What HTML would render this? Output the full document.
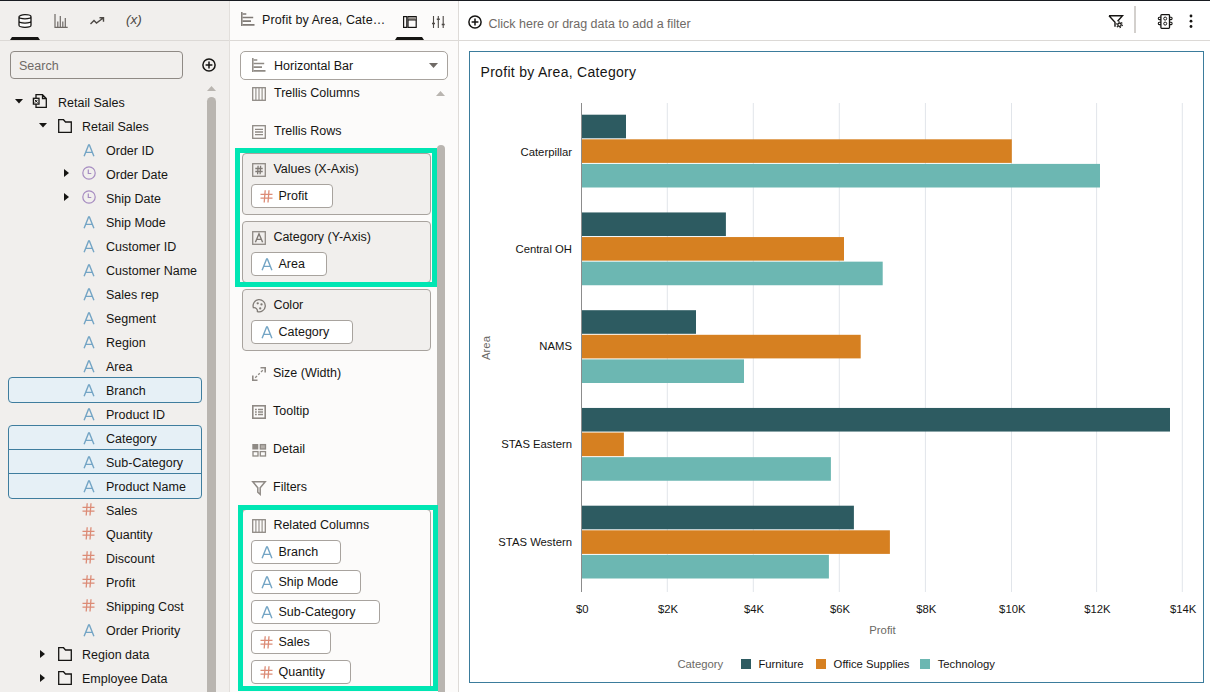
<!DOCTYPE html><html><head><meta charset="utf-8"><style>
html,body{margin:0;padding:0;width:1210px;height:692px;overflow:hidden;background:#fff;}
body{position:relative;font-family:"Liberation Sans",sans-serif;}
.t{position:absolute;white-space:nowrap;font-family:"Liberation Sans",sans-serif;}
svg{overflow:visible}
</style></head><body>
<div style="position:absolute;left:0px;top:0px;width:230px;height:692px;box-sizing:border-box;background:#f1efed;"></div>
<div style="position:absolute;left:229px;top:0px;width:1px;height:692px;box-sizing:border-box;background:#e2dfdc;"></div>
<div style="position:absolute;left:230px;top:0px;width:228px;height:692px;box-sizing:border-box;background:#fcfbfa;"></div>
<div style="position:absolute;left:458px;top:0px;width:1px;height:692px;box-sizing:border-box;background:#dedbd8;"></div>
<div style="position:absolute;left:459px;top:0px;width:751px;height:692px;box-sizing:border-box;background:#ffffff;"></div>
<div style="position:absolute;left:0px;top:0px;width:1210px;height:1px;box-sizing:border-box;background:#181b21;"></div>
<div style="position:absolute;left:0px;top:40px;width:229px;height:1px;box-sizing:border-box;background:#dcd9d6;"></div>
<svg style="position:absolute;left:10px;top:37px" width="30" height="3" viewBox="0 0 30 3"><path d="M2 0H28L30 3H0Z" fill="#161513"/></svg>
<svg style="position:absolute;left:18px;top:14px" width="14" height="14" viewBox="0 0 14 14"><path d="M1 2.8C1 1.5 3.9 0.7 7 0.7S13 1.5 13 2.8V11.2C13 12.5 10.1 13.3 7 13.3S1 12.5 1 11.2Z M1 2.8C1 4.1 3.9 4.9 7 4.9S13 4.1 13 2.8 M1 7C1 8.3 3.9 9.1 7 9.1S13 8.3 13 7" fill="#fff" stroke="#161513" stroke-width="1.3"/></svg>
<svg style="position:absolute;left:54px;top:14px" width="14" height="14" viewBox="0 0 14 14"><path d="M1 0V13.3H13.7 M3.8 13V7.5 M6.3 13V2 M8.8 13V7.5 M11.3 13V4" fill="none" stroke="#6f6a66" stroke-width="1.2"/></svg>
<svg style="position:absolute;left:90px;top:17px" width="15" height="8" viewBox="0 0 15 8"><path d="M0.5 7L4 3.5L6.5 6L13.5 0.8 M9.5 0.8H13.5V4.8" fill="none" stroke="#4d4945" stroke-width="1.4"/></svg>
<div class="t" style="left:126px;top:13.27px;font-size:13.5px;line-height:13.5px;color:#4d4945;font-style:italic;">(x)</div>
<div style="position:absolute;left:10px;top:51px;width:173px;height:28px;box-sizing:border-box;border:1px solid #8f8a85;border-radius:4px;background:#f1efed;"></div>
<div class="t" style="left:19px;top:60.32px;font-size:12.5px;line-height:12.5px;color:#6f6a66;">Search</div>
<svg style="position:absolute;left:202px;top:58px" width="14" height="14" viewBox="0 0 14 14"><circle cx="7" cy="7" r="6.1" fill="none" stroke="#161513" stroke-width="1.5"/><path d="M7 3.6V10.4M3.6 7H10.4" stroke="#161513" stroke-width="1.5"/></svg>
<svg style="position:absolute;left:207px;top:86px" width="9" height="5" viewBox="0 0 9 5"><path d="M0 5H9L4.5 0Z" fill="#b9b5b0"/></svg>
<div style="position:absolute;left:207px;top:97px;width:9px;height:600px;box-sizing:border-box;background:#b9b5b0;border-radius:4.5px;"></div>
<div style="position:absolute;left:8px;top:377px;width:194px;height:26px;box-sizing:border-box;border:1px solid #3f7d9e;border-radius:4px;background:#e6f0f6;"></div>
<div style="position:absolute;left:8px;top:425px;width:194px;height:74px;box-sizing:border-box;border:1px solid #3f7d9e;border-radius:4px;background:#e6f0f6;"></div>
<div style="position:absolute;left:8px;top:449px;width:194px;height:1px;box-sizing:border-box;background:#3f7d9e;"></div>
<div style="position:absolute;left:8px;top:473px;width:194px;height:1px;box-sizing:border-box;background:#3f7d9e;"></div>
<svg style="position:absolute;left:15px;top:99px" width="8" height="5" viewBox="0 0 8 5"><path d="M0 0H8L4 4.5Z" fill="#161513"/></svg>
<svg style="position:absolute;left:33px;top:94px" width="14" height="14" viewBox="0 0 14 14"><path d="M3 0.7H9.5L13.3 4.5V13.3H3Z M9.5 0.7V4.5H13.3" fill="none" stroke="#161513" stroke-width="1.3"/><rect x="0.4" y="4.3" width="5.6" height="5.8" fill="#f1efed" stroke="#161513" stroke-width="1.3"/><path d="M1.8 5.8L4.6 8.6M4.6 5.8L1.8 8.6" stroke="#161513" stroke-width="1"/></svg>
<div class="t" style="left:58px;top:97.02px;font-size:12.5px;line-height:12.5px;color:#161513;">Retail Sales</div>
<svg style="position:absolute;left:39px;top:123px" width="8" height="5" viewBox="0 0 8 5"><path d="M0 0H8L4 4.5Z" fill="#161513"/></svg>
<svg style="position:absolute;left:58px;top:119px" width="14" height="14" viewBox="0 0 14 14"><path d="M0.7 0.7H5.5L7.5 3H13.3V13.3H0.7Z" fill="none" stroke="#161513" stroke-width="1.3"/></svg>
<div class="t" style="left:82px;top:121.02px;font-size:12.5px;line-height:12.5px;color:#161513;">Retail Sales</div>
<svg style="position:absolute;left:83px;top:144px" width="12" height="13" viewBox="0 0 12 13"><path d="M1.1 12.2 L5.6 0.9 H6.4 L10.9 12.2 M3.1 8.4 H8.9" fill="none" stroke="#74a5c5" stroke-width="1.4"/></svg>
<div class="t" style="left:106px;top:145.02px;font-size:12.5px;line-height:12.5px;color:#161513;">Order ID</div>
<svg style="position:absolute;left:64px;top:169px" width="5" height="8" viewBox="0 0 5 8"><path d="M0 0V8L5 4Z" fill="#161513"/></svg>
<svg style="position:absolute;left:82px;top:166px" width="14" height="14" viewBox="0 0 14 14"><circle cx="7" cy="7" r="6.2" fill="none" stroke="#a68cc1" stroke-width="1.2"/><path d="M6.3 3.5V7.5H9.3" fill="none" stroke="#a68cc1" stroke-width="1.2"/></svg>
<div class="t" style="left:106px;top:169.02px;font-size:12.5px;line-height:12.5px;color:#161513;">Order Date</div>
<svg style="position:absolute;left:64px;top:193px" width="5" height="8" viewBox="0 0 5 8"><path d="M0 0V8L5 4Z" fill="#161513"/></svg>
<svg style="position:absolute;left:82px;top:190px" width="14" height="14" viewBox="0 0 14 14"><circle cx="7" cy="7" r="6.2" fill="none" stroke="#a68cc1" stroke-width="1.2"/><path d="M6.3 3.5V7.5H9.3" fill="none" stroke="#a68cc1" stroke-width="1.2"/></svg>
<div class="t" style="left:106px;top:193.02px;font-size:12.5px;line-height:12.5px;color:#161513;">Ship Date</div>
<svg style="position:absolute;left:83px;top:216px" width="12" height="13" viewBox="0 0 12 13"><path d="M1.1 12.2 L5.6 0.9 H6.4 L10.9 12.2 M3.1 8.4 H8.9" fill="none" stroke="#74a5c5" stroke-width="1.4"/></svg>
<div class="t" style="left:106px;top:217.02px;font-size:12.5px;line-height:12.5px;color:#161513;">Ship Mode</div>
<svg style="position:absolute;left:83px;top:240px" width="12" height="13" viewBox="0 0 12 13"><path d="M1.1 12.2 L5.6 0.9 H6.4 L10.9 12.2 M3.1 8.4 H8.9" fill="none" stroke="#74a5c5" stroke-width="1.4"/></svg>
<div class="t" style="left:106px;top:241.02px;font-size:12.5px;line-height:12.5px;color:#161513;">Customer ID</div>
<svg style="position:absolute;left:83px;top:264px" width="12" height="13" viewBox="0 0 12 13"><path d="M1.1 12.2 L5.6 0.9 H6.4 L10.9 12.2 M3.1 8.4 H8.9" fill="none" stroke="#74a5c5" stroke-width="1.4"/></svg>
<div class="t" style="left:106px;top:265.02px;font-size:12.5px;line-height:12.5px;color:#161513;">Customer Name</div>
<svg style="position:absolute;left:83px;top:288px" width="12" height="13" viewBox="0 0 12 13"><path d="M1.1 12.2 L5.6 0.9 H6.4 L10.9 12.2 M3.1 8.4 H8.9" fill="none" stroke="#74a5c5" stroke-width="1.4"/></svg>
<div class="t" style="left:106px;top:289.02px;font-size:12.5px;line-height:12.5px;color:#161513;">Sales rep</div>
<svg style="position:absolute;left:83px;top:312px" width="12" height="13" viewBox="0 0 12 13"><path d="M1.1 12.2 L5.6 0.9 H6.4 L10.9 12.2 M3.1 8.4 H8.9" fill="none" stroke="#74a5c5" stroke-width="1.4"/></svg>
<div class="t" style="left:106px;top:313.02px;font-size:12.5px;line-height:12.5px;color:#161513;">Segment</div>
<svg style="position:absolute;left:83px;top:336px" width="12" height="13" viewBox="0 0 12 13"><path d="M1.1 12.2 L5.6 0.9 H6.4 L10.9 12.2 M3.1 8.4 H8.9" fill="none" stroke="#74a5c5" stroke-width="1.4"/></svg>
<div class="t" style="left:106px;top:337.02px;font-size:12.5px;line-height:12.5px;color:#161513;">Region</div>
<svg style="position:absolute;left:83px;top:360px" width="12" height="13" viewBox="0 0 12 13"><path d="M1.1 12.2 L5.6 0.9 H6.4 L10.9 12.2 M3.1 8.4 H8.9" fill="none" stroke="#74a5c5" stroke-width="1.4"/></svg>
<div class="t" style="left:106px;top:361.02px;font-size:12.5px;line-height:12.5px;color:#161513;">Area</div>
<svg style="position:absolute;left:83px;top:384px" width="12" height="13" viewBox="0 0 12 13"><path d="M1.1 12.2 L5.6 0.9 H6.4 L10.9 12.2 M3.1 8.4 H8.9" fill="none" stroke="#74a5c5" stroke-width="1.4"/></svg>
<div class="t" style="left:106px;top:385.02px;font-size:12.5px;line-height:12.5px;color:#161513;">Branch</div>
<svg style="position:absolute;left:83px;top:408px" width="12" height="13" viewBox="0 0 12 13"><path d="M1.1 12.2 L5.6 0.9 H6.4 L10.9 12.2 M3.1 8.4 H8.9" fill="none" stroke="#74a5c5" stroke-width="1.4"/></svg>
<div class="t" style="left:106px;top:409.02px;font-size:12.5px;line-height:12.5px;color:#161513;">Product ID</div>
<svg style="position:absolute;left:83px;top:432px" width="12" height="13" viewBox="0 0 12 13"><path d="M1.1 12.2 L5.6 0.9 H6.4 L10.9 12.2 M3.1 8.4 H8.9" fill="none" stroke="#74a5c5" stroke-width="1.4"/></svg>
<div class="t" style="left:106px;top:433.02px;font-size:12.5px;line-height:12.5px;color:#161513;">Category</div>
<svg style="position:absolute;left:83px;top:456px" width="12" height="13" viewBox="0 0 12 13"><path d="M1.1 12.2 L5.6 0.9 H6.4 L10.9 12.2 M3.1 8.4 H8.9" fill="none" stroke="#74a5c5" stroke-width="1.4"/></svg>
<div class="t" style="left:106px;top:457.02px;font-size:12.5px;line-height:12.5px;color:#161513;">Sub-Category</div>
<svg style="position:absolute;left:83px;top:480px" width="12" height="13" viewBox="0 0 12 13"><path d="M1.1 12.2 L5.6 0.9 H6.4 L10.9 12.2 M3.1 8.4 H8.9" fill="none" stroke="#74a5c5" stroke-width="1.4"/></svg>
<div class="t" style="left:106px;top:481.02px;font-size:12.5px;line-height:12.5px;color:#161513;">Product Name</div>
<svg style="position:absolute;left:82px;top:503px" width="13" height="13" viewBox="0 0 13 13"><path d="M0.5 4.3H12.5 M0.5 8.2H12.5 M5.2 0.3 L4.2 12.5 M9 0.3 L8 12.5" fill="none" stroke="#dc8b76" stroke-width="1.3"/></svg>
<div class="t" style="left:106px;top:505.02px;font-size:12.5px;line-height:12.5px;color:#161513;">Sales</div>
<svg style="position:absolute;left:82px;top:527px" width="13" height="13" viewBox="0 0 13 13"><path d="M0.5 4.3H12.5 M0.5 8.2H12.5 M5.2 0.3 L4.2 12.5 M9 0.3 L8 12.5" fill="none" stroke="#dc8b76" stroke-width="1.3"/></svg>
<div class="t" style="left:106px;top:529.02px;font-size:12.5px;line-height:12.5px;color:#161513;">Quantity</div>
<svg style="position:absolute;left:82px;top:551px" width="13" height="13" viewBox="0 0 13 13"><path d="M0.5 4.3H12.5 M0.5 8.2H12.5 M5.2 0.3 L4.2 12.5 M9 0.3 L8 12.5" fill="none" stroke="#dc8b76" stroke-width="1.3"/></svg>
<div class="t" style="left:106px;top:553.02px;font-size:12.5px;line-height:12.5px;color:#161513;">Discount</div>
<svg style="position:absolute;left:82px;top:575px" width="13" height="13" viewBox="0 0 13 13"><path d="M0.5 4.3H12.5 M0.5 8.2H12.5 M5.2 0.3 L4.2 12.5 M9 0.3 L8 12.5" fill="none" stroke="#dc8b76" stroke-width="1.3"/></svg>
<div class="t" style="left:106px;top:577.02px;font-size:12.5px;line-height:12.5px;color:#161513;">Profit</div>
<svg style="position:absolute;left:82px;top:599px" width="13" height="13" viewBox="0 0 13 13"><path d="M0.5 4.3H12.5 M0.5 8.2H12.5 M5.2 0.3 L4.2 12.5 M9 0.3 L8 12.5" fill="none" stroke="#dc8b76" stroke-width="1.3"/></svg>
<div class="t" style="left:106px;top:601.02px;font-size:12.5px;line-height:12.5px;color:#161513;">Shipping Cost</div>
<svg style="position:absolute;left:83px;top:624px" width="12" height="13" viewBox="0 0 12 13"><path d="M1.1 12.2 L5.6 0.9 H6.4 L10.9 12.2 M3.1 8.4 H8.9" fill="none" stroke="#74a5c5" stroke-width="1.4"/></svg>
<div class="t" style="left:106px;top:625.02px;font-size:12.5px;line-height:12.5px;color:#161513;">Order Priority</div>
<svg style="position:absolute;left:40px;top:650px" width="5" height="8" viewBox="0 0 5 8"><path d="M0 0V8L5 4Z" fill="#161513"/></svg>
<svg style="position:absolute;left:58px;top:647px" width="14" height="14" viewBox="0 0 14 14"><path d="M0.7 0.7H5.5L7.5 3H13.3V13.3H0.7Z" fill="none" stroke="#161513" stroke-width="1.3"/></svg>
<div class="t" style="left:82px;top:649.02px;font-size:12.5px;line-height:12.5px;color:#161513;">Region data</div>
<svg style="position:absolute;left:40px;top:674px" width="5" height="8" viewBox="0 0 5 8"><path d="M0 0V8L5 4Z" fill="#161513"/></svg>
<svg style="position:absolute;left:58px;top:671px" width="14" height="14" viewBox="0 0 14 14"><path d="M0.7 0.7H5.5L7.5 3H13.3V13.3H0.7Z" fill="none" stroke="#161513" stroke-width="1.3"/></svg>
<div class="t" style="left:82px;top:673.02px;font-size:12.5px;line-height:12.5px;color:#161513;">Employee Data</div>
<div style="position:absolute;left:230px;top:40px;width:228px;height:1px;box-sizing:border-box;background:#dcd9d6;"></div>
<svg style="position:absolute;left:241px;top:12px" width="14" height="14" viewBox="0 0 14 14"><path d="M0.8 0V14" fill="none" stroke="#7f7a75" stroke-width="1.5"/><path d="M1.5 2H5.3 M1.5 5.5H12.2 M1.5 9.2H10 M1.5 12.8H13.5" fill="none" stroke="#7f7a75" stroke-width="1.7"/></svg>
<div class="t" style="left:262px;top:14.12px;font-size:12.5px;line-height:12.5px;color:#161513;letter-spacing:0.12px;">Profit by Area, Cate…</div>
<svg style="position:absolute;left:403px;top:16px" width="14" height="12" viewBox="0 0 14 12"><rect x="0.6" y="0.6" width="3.2" height="10.8" fill="none" stroke="#161513" stroke-width="1.2"/><rect x="5" y="0.6" width="8.2" height="10.8" fill="none" stroke="#161513" stroke-width="1.2"/><rect x="5.6" y="1.2" width="7" height="2.6" fill="#8f8a85"/><path d="M5 4H13.2" stroke="#161513" stroke-width="1"/></svg>
<svg style="position:absolute;left:395px;top:37px" width="29" height="3" viewBox="0 0 29 3"><path d="M2 0H27L29 3H0Z" fill="#161513"/></svg>
<svg style="position:absolute;left:432px;top:16px" width="13" height="12" viewBox="0 0 13 12"><path d="M1.5 0V12 M6.3 0V12 M11.2 0V12" fill="none" stroke="#4d4945" stroke-width="1.1"/><path d="M0 7.4H3 M4.8 3.3H7.8 M9.7 8.4H12.7" fill="none" stroke="#4d4945" stroke-width="1.5"/></svg>
<div style="position:absolute;left:240px;top:51px;width:208px;height:29px;box-sizing:border-box;border:1px solid #a8a39e;border-radius:5px;background:#fff;"></div>
<svg style="position:absolute;left:252px;top:58px" width="14" height="14" viewBox="0 0 14 14"><path d="M0.8 0V14" fill="none" stroke="#8f8a85" stroke-width="1.5"/><path d="M1.5 2H5.3 M1.5 5.5H12.2 M1.5 9.2H10 M1.5 12.8H13.5" fill="none" stroke="#8f8a85" stroke-width="1.7"/></svg>
<div class="t" style="left:274px;top:60.32px;font-size:12.5px;line-height:12.5px;color:#161513;">Horizontal Bar</div>
<svg style="position:absolute;left:429px;top:63px" width="9" height="5" viewBox="0 0 9 5"><path d="M0 0H9L4.5 5Z" fill="#6f6a66"/></svg>
<svg style="position:absolute;left:252px;top:87px" width="14" height="14" viewBox="0 0 14 14"><rect x="0.7" y="0.7" width="12.6" height="12.6" fill="none" stroke="#8f8a85" stroke-width="1.3"/><path d="M3.9 1V13 M7 1V13 M10.1 1V13" stroke="#8f8a85" stroke-width="1.1"/></svg>
<div class="t" style="left:274px;top:87.02px;font-size:12.5px;line-height:12.5px;color:#161513;">Trellis Columns</div>
<svg style="position:absolute;left:436px;top:91px" width="9" height="5" viewBox="0 0 9 5"><path d="M0 5H9L4.5 0Z" fill="#b9b5b0"/></svg>
<svg style="position:absolute;left:252px;top:125px" width="14" height="14" viewBox="0 0 14 14"><rect x="0.7" y="0.7" width="12.6" height="12.6" fill="none" stroke="#8f8a85" stroke-width="1.3"/><path d="M3 4.3H11 M3 7H11 M3 9.7H11" stroke="#8f8a85" stroke-width="1.3"/></svg>
<div class="t" style="left:274px;top:125.02px;font-size:12.5px;line-height:12.5px;color:#161513;">Trellis Rows</div>
<div style="position:absolute;left:437px;top:145px;width:8px;height:560px;box-sizing:border-box;background:#b9b5b0;border-radius:4px;"></div>
<div style="position:absolute;left:242px;top:153px;width:189px;height:62px;box-sizing:border-box;border:1px solid #a8a39e;border-radius:4px;background:#f1efed;"></div>
<svg style="position:absolute;left:252px;top:163px" width="14" height="14" viewBox="0 0 14 14"><rect x="0.7" y="0.7" width="12.6" height="12.6" fill="none" stroke="#8f8a85" stroke-width="1.3"/><path d="M3.3 5.5H10.7M3.3 8.5H10.7M6.1 2.8L5.6 11.2M8.6 2.8L8.1 11.2" stroke="#7f7a75" stroke-width="1.3"/></svg>
<div class="t" style="left:273.4px;top:162.62px;font-size:12.5px;line-height:12.5px;color:#161513;">Values (X-Axis)</div>
<div style="position:absolute;left:251px;top:184px;width:82px;height:24px;box-sizing:border-box;border:1px solid #a8a39e;border-radius:4px;background:#fff;"></div>
<svg style="position:absolute;left:259.5px;top:189.5px" width="13" height="13" viewBox="0 0 13 13"><path d="M0.5 4.3H12.5 M0.5 8.2H12.5 M5.2 0.3 L4.2 12.5 M9 0.3 L8 12.5" fill="none" stroke="#dc8b76" stroke-width="1.3"/></svg>
<div class="t" style="left:278.5px;top:189.82px;font-size:12.5px;line-height:12.5px;color:#161513;">Profit</div>
<div style="position:absolute;left:242px;top:221px;width:189px;height:62px;box-sizing:border-box;border:1px solid #a8a39e;border-radius:4px;background:#f1efed;"></div>
<svg style="position:absolute;left:252px;top:231px" width="14" height="14" viewBox="0 0 14 14"><rect x="0.7" y="0.7" width="12.6" height="12.6" fill="none" stroke="#8f8a85" stroke-width="1.3"/><path d="M3.4 11.2L7 2.8L10.6 11.2M4.7 8.4H9.3" fill="none" stroke="#7f7a75" stroke-width="1.4"/></svg>
<div class="t" style="left:273.4px;top:230.62px;font-size:12.5px;line-height:12.5px;color:#161513;">Category (Y-Axis)</div>
<div style="position:absolute;left:251px;top:252px;width:76px;height:24px;box-sizing:border-box;border:1px solid #a8a39e;border-radius:4px;background:#fff;"></div>
<svg style="position:absolute;left:260.5px;top:258px" width="12" height="13" viewBox="0 0 12 13"><path d="M1.1 12.2 L5.6 0.9 H6.4 L10.9 12.2 M3.1 8.4 H8.9" fill="none" stroke="#74a5c5" stroke-width="1.4"/></svg>
<div class="t" style="left:278.5px;top:257.82px;font-size:12.5px;line-height:12.5px;color:#161513;">Area</div>
<div style="position:absolute;left:242px;top:289px;width:189px;height:62px;box-sizing:border-box;border:1px solid #a8a39e;border-radius:4px;background:#f1efed;"></div>
<svg style="position:absolute;left:252px;top:299px" width="14" height="14" viewBox="0 0 14 14"><path d="M1.4 8.7A6.1 6.1 0 1 1 5.4 12.6A3.4 3.4 0 0 0 1.4 8.7Z" fill="none" stroke="#7f7a75" stroke-width="1.3"/><circle cx="5.7" cy="4.3" r="1.15" fill="#7f7a75"/><circle cx="9.5" cy="5.4" r="1.15" fill="#7f7a75"/><circle cx="8.2" cy="9.4" r="1.15" fill="#7f7a75"/></svg>
<div class="t" style="left:273.4px;top:298.62px;font-size:12.5px;line-height:12.5px;color:#161513;">Color</div>
<div style="position:absolute;left:251px;top:320px;width:102px;height:24px;box-sizing:border-box;border:1px solid #a8a39e;border-radius:4px;background:#fff;"></div>
<svg style="position:absolute;left:260.5px;top:326px" width="12" height="13" viewBox="0 0 12 13"><path d="M1.1 12.2 L5.6 0.9 H6.4 L10.9 12.2 M3.1 8.4 H8.9" fill="none" stroke="#74a5c5" stroke-width="1.4"/></svg>
<div class="t" style="left:278.5px;top:325.82px;font-size:12.5px;line-height:12.5px;color:#161513;">Category</div>
<div style="position:absolute;left:235px;top:148px;width:202px;height:139px;box-sizing:border-box;border:5px solid #00e6b3;"></div>
<svg style="position:absolute;left:252px;top:367px" width="14" height="14" viewBox="0 0 14 14"><path d="M0.8 8.5V13.2H5.5 M8.5 0.8H13.2V5.5" fill="none" stroke="#8f8a85" stroke-width="1.6"/><path d="M3.2 10.8L5 9 M6.2 7.8L7.8 6.2 M9 5L10.8 3.2" stroke="#8f8a85" stroke-width="1.3"/></svg>
<div class="t" style="left:273px;top:367.32px;font-size:12.5px;line-height:12.5px;color:#161513;">Size (Width)</div>
<svg style="position:absolute;left:252px;top:405px" width="14" height="14" viewBox="0 0 14 14"><rect x="0.8" y="0.8" width="12.4" height="12.4" fill="none" stroke="#8f8a85" stroke-width="1.6"/><path d="M3 4.5H4.8M6 4.5H11M3 7H4.8M6 7H11M3 9.5H4.8M6 9.5H11" stroke="#8f8a85" stroke-width="1.3"/></svg>
<div class="t" style="left:273px;top:405.32px;font-size:12.5px;line-height:12.5px;color:#161513;">Tooltip</div>
<svg style="position:absolute;left:252px;top:443px" width="14" height="14" viewBox="0 0 14 14"><rect x="0.3" y="1" width="6" height="5.5" fill="#8f8a85"/><rect x="8.3" y="1.6" width="5.2" height="4.4" fill="#b5b0ab" stroke="#8f8a85" stroke-width="1.3"/><rect x="1" y="8.6" width="5" height="4.4" fill="none" stroke="#8f8a85" stroke-width="1.3"/><rect x="8.3" y="8.6" width="5.2" height="4.4" fill="none" stroke="#8f8a85" stroke-width="1.3"/></svg>
<div class="t" style="left:273px;top:443.32px;font-size:12.5px;line-height:12.5px;color:#161513;">Detail</div>
<svg style="position:absolute;left:252px;top:481px" width="14" height="14" viewBox="0 0 14 14"><path d="M0.8 0.8H13.2L8.2 6.8V13.3L5.8 11.2V6.8Z" fill="none" stroke="#8f8a85" stroke-width="1.5"/></svg>
<div class="t" style="left:273px;top:481.32px;font-size:12.5px;line-height:12.5px;color:#161513;">Filters</div>
<div style="position:absolute;left:242px;top:509px;width:189px;height:200px;box-sizing:border-box;border:1px solid #a8a39e;border-radius:4px;background:#fcfbfa;"></div>
<svg style="position:absolute;left:252px;top:519px" width="14" height="14" viewBox="0 0 14 14"><rect x="0.7" y="0.7" width="12.6" height="12.6" fill="none" stroke="#8f8a85" stroke-width="1.3"/><path d="M3.9 1V13 M7 1V13 M10.1 1V13" stroke="#8f8a85" stroke-width="1.1"/></svg>
<div class="t" style="left:273.4px;top:519.32px;font-size:12.5px;line-height:12.5px;color:#161513;">Related Columns</div>
<div style="position:absolute;left:251px;top:540px;width:90px;height:24px;box-sizing:border-box;border:1px solid #a8a39e;border-radius:4px;background:#fff;"></div>
<svg style="position:absolute;left:260.5px;top:546px" width="12" height="13" viewBox="0 0 12 13"><path d="M1.1 12.2 L5.6 0.9 H6.4 L10.9 12.2 M3.1 8.4 H8.9" fill="none" stroke="#74a5c5" stroke-width="1.4"/></svg>
<div class="t" style="left:278.5px;top:545.82px;font-size:12.5px;line-height:12.5px;color:#161513;">Branch</div>
<div style="position:absolute;left:251px;top:570px;width:110px;height:24px;box-sizing:border-box;border:1px solid #a8a39e;border-radius:4px;background:#fff;"></div>
<svg style="position:absolute;left:260.5px;top:576px" width="12" height="13" viewBox="0 0 12 13"><path d="M1.1 12.2 L5.6 0.9 H6.4 L10.9 12.2 M3.1 8.4 H8.9" fill="none" stroke="#74a5c5" stroke-width="1.4"/></svg>
<div class="t" style="left:278.5px;top:575.82px;font-size:12.5px;line-height:12.5px;color:#161513;">Ship Mode</div>
<div style="position:absolute;left:251px;top:600px;width:129px;height:24px;box-sizing:border-box;border:1px solid #a8a39e;border-radius:4px;background:#fff;"></div>
<svg style="position:absolute;left:260.5px;top:606px" width="12" height="13" viewBox="0 0 12 13"><path d="M1.1 12.2 L5.6 0.9 H6.4 L10.9 12.2 M3.1 8.4 H8.9" fill="none" stroke="#74a5c5" stroke-width="1.4"/></svg>
<div class="t" style="left:278.5px;top:605.82px;font-size:12.5px;line-height:12.5px;color:#161513;">Sub-Category</div>
<div style="position:absolute;left:251px;top:630px;width:80px;height:24px;box-sizing:border-box;border:1px solid #a8a39e;border-radius:4px;background:#fff;"></div>
<svg style="position:absolute;left:259.5px;top:635.5px" width="13" height="13" viewBox="0 0 13 13"><path d="M0.5 4.3H12.5 M0.5 8.2H12.5 M5.2 0.3 L4.2 12.5 M9 0.3 L8 12.5" fill="none" stroke="#dc8b76" stroke-width="1.3"/></svg>
<div class="t" style="left:278.5px;top:635.82px;font-size:12.5px;line-height:12.5px;color:#161513;">Sales</div>
<div style="position:absolute;left:251px;top:660px;width:100px;height:24px;box-sizing:border-box;border:1px solid #a8a39e;border-radius:4px;background:#fff;"></div>
<svg style="position:absolute;left:259.5px;top:665.5px" width="13" height="13" viewBox="0 0 13 13"><path d="M0.5 4.3H12.5 M0.5 8.2H12.5 M5.2 0.3 L4.2 12.5 M9 0.3 L8 12.5" fill="none" stroke="#dc8b76" stroke-width="1.3"/></svg>
<div class="t" style="left:278.5px;top:665.82px;font-size:12.5px;line-height:12.5px;color:#161513;">Quantity</div>
<div style="position:absolute;left:238px;top:505px;width:200px;height:200px;box-sizing:border-box;border:5px solid #00e6b3;border-bottom:none;"></div>
<div style="position:absolute;left:238px;top:686px;width:200px;height:5px;box-sizing:border-box;background:#00e6b3;"></div>
<div style="position:absolute;left:238px;top:691px;width:200px;height:1px;box-sizing:border-box;background:#fcfbfa;"></div>
<div style="position:absolute;left:459px;top:40px;width:751px;height:1px;box-sizing:border-box;background:#dcd9d6;"></div>
<svg style="position:absolute;left:468px;top:15px" width="14" height="14" viewBox="0 0 14 14"><circle cx="7" cy="7" r="6.1" fill="none" stroke="#161513" stroke-width="1.5"/><path d="M7 3.6V10.4M3.6 7H10.4" stroke="#161513" stroke-width="1.5"/></svg>
<div class="t" style="left:488.5px;top:18.32px;font-size:12.5px;line-height:12.5px;color:#6f6a66;">Click here or drag data to add a filter</div>
<svg style="position:absolute;left:1108px;top:15px" width="16" height="14" viewBox="0 0 16 14"><path d="M1 0.7H14.5L9.6 6.3 M1 0.7L7 7.3V11.8" fill="none" stroke="#161513" stroke-width="1.4"/><circle cx="11.5" cy="9.7" r="1.7" fill="none" stroke="#161513" stroke-width="1.3"/><circle cx="11.5" cy="9.7" r="2.9" fill="none" stroke="#161513" stroke-width="1.1" stroke-dasharray="1.3 1.75"/></svg>
<div style="position:absolute;left:1134px;top:6px;width:2px;height:27px;box-sizing:border-box;background:#d3d0cd;"></div>
<svg style="position:absolute;left:1157px;top:14px" width="16" height="16" viewBox="0 0 16 16"><rect x="3.9" y="0.7" width="8.6" height="13.6" rx="0.8" fill="#fff" stroke="#161513" stroke-width="1.3"/><circle cx="8.2" cy="4.6" r="1.5" fill="none" stroke="#161513" stroke-width="1"/><circle cx="8.2" cy="9.6" r="1.5" fill="none" stroke="#161513" stroke-width="1"/><path d="M3.9 3.2H2.2C1 3.2 1 5.6 2.2 5.6H3.9 M3.9 8.2H2.2C1 8.2 1 10.6 2.2 10.6H3.9 M12.5 3.2H14.2C15.4 3.2 15.4 5.6 14.2 5.6H12.5 M12.5 8.2H14.2C15.4 8.2 15.4 10.6 14.2 10.6H12.5" fill="none" stroke="#161513" stroke-width="1.1"/></svg>
<svg style="position:absolute;left:1189px;top:14px" width="4" height="16" viewBox="0 0 4 16"><circle cx="2" cy="2" r="1.4" fill="#161513"/><circle cx="2" cy="7.2" r="1.4" fill="#161513"/><circle cx="2" cy="12.5" r="1.4" fill="#161513"/></svg>
<div style="position:absolute;left:469px;top:51px;width:735px;height:632px;box-sizing:border-box;border:1px solid #3b7c9c;background:#fff;"></div>
<div class="t" style="left:480.5px;top:65.25px;font-size:14px;line-height:14px;color:#161513;letter-spacing:0.3px;">Profit by Area, Category</div>
<svg style="position:absolute;left:0px;top:0px" width="1210" height="692" viewBox="0 0 1210 692"><rect x="666.80" y="103" width="1" height="489" fill="#e1e5ea"/><rect x="752.80" y="103" width="1" height="489" fill="#e1e5ea"/><rect x="838.80" y="103" width="1" height="489" fill="#e1e5ea"/><rect x="924.90" y="103" width="1" height="489" fill="#e1e5ea"/><rect x="1011.00" y="103" width="1" height="489" fill="#e1e5ea"/><rect x="1096.10" y="103" width="1" height="489" fill="#e1e5ea"/><rect x="1181.80" y="103" width="1" height="489" fill="#e1e5ea"/><rect x="581.50" y="114.70" width="44.50" height="23.6" fill="#2d5b61"/><rect x="581.50" y="139.30" width="430.30" height="23.6" fill="#d68021"/><rect x="581.50" y="163.90" width="518.50" height="23.6" fill="#6cb7b2"/><rect x="581.50" y="212.45" width="144.40" height="23.6" fill="#2d5b61"/><rect x="581.50" y="237.05" width="262.50" height="23.6" fill="#d68021"/><rect x="581.50" y="261.65" width="301.20" height="23.6" fill="#6cb7b2"/><rect x="581.50" y="310.20" width="114.50" height="23.6" fill="#2d5b61"/><rect x="581.50" y="334.80" width="279.20" height="23.6" fill="#d68021"/><rect x="581.50" y="359.40" width="162.50" height="23.6" fill="#6cb7b2"/><rect x="581.50" y="407.95" width="588.50" height="23.6" fill="#2d5b61"/><rect x="581.50" y="432.55" width="42.40" height="23.6" fill="#d68021"/><rect x="581.50" y="457.15" width="249.40" height="23.6" fill="#6cb7b2"/><rect x="581.50" y="505.70" width="272.40" height="23.6" fill="#2d5b61"/><rect x="581.50" y="530.30" width="308.40" height="23.6" fill="#d68021"/><rect x="581.50" y="554.90" width="247.40" height="23.6" fill="#6cb7b2"/><rect x="581" y="103" width="1" height="489" fill="#8c8c8c"/></svg>
<div class="t" style="right:638px;top:146.83px;font-size:11.3px;line-height:11.3px;color:#161513;text-align:right;">Caterpillar</div>
<div class="t" style="right:638px;top:244.33px;font-size:11.3px;line-height:11.3px;color:#161513;text-align:right;">Central OH</div>
<div class="t" style="right:638px;top:341.43px;font-size:11.3px;line-height:11.3px;color:#161513;text-align:right;">NAMS</div>
<div class="t" style="right:638px;top:438.73px;font-size:11.3px;line-height:11.3px;color:#161513;text-align:right;">STAS Eastern</div>
<div class="t" style="right:638px;top:536.53px;font-size:11.3px;line-height:11.3px;color:#161513;text-align:right;">STAS Western</div>
<div class="t" style="left:482.29999999999995px;width:200px;text-align:center;top:604.33px;font-size:11.3px;line-height:11.3px;color:#161513;">$0</div>
<div class="t" style="left:568.0999999999999px;width:200px;text-align:center;top:604.33px;font-size:11.3px;line-height:11.3px;color:#161513;">$2K</div>
<div class="t" style="left:654.0999999999999px;width:200px;text-align:center;top:604.33px;font-size:11.3px;line-height:11.3px;color:#161513;">$4K</div>
<div class="t" style="left:740.0999999999999px;width:200px;text-align:center;top:604.33px;font-size:11.3px;line-height:11.3px;color:#161513;">$6K</div>
<div class="t" style="left:826.1999999999999px;width:200px;text-align:center;top:604.33px;font-size:11.3px;line-height:11.3px;color:#161513;">$8K</div>
<div class="t" style="left:912.3px;width:200px;text-align:center;top:604.33px;font-size:11.3px;line-height:11.3px;color:#161513;">$10K</div>
<div class="t" style="left:997.3999999999999px;width:200px;text-align:center;top:604.33px;font-size:11.3px;line-height:11.3px;color:#161513;">$12K</div>
<div class="t" style="left:1083.1px;width:200px;text-align:center;top:604.33px;font-size:11.3px;line-height:11.3px;color:#161513;">$14K</div>
<div class="t" style="left:782.5px;width:200px;text-align:center;top:625.33px;font-size:11.3px;line-height:11.3px;color:#6b6965;">Profit</div>
<div class="t" style="left:436px;top:341.5px;width:100px;text-align:center;font-size:11.3px;line-height:12px;color:#6b6965;transform:rotate(-90deg);">Area</div>
<div class="t" style="left:677.4px;top:659.03px;font-size:11.3px;line-height:11.3px;color:#6b6965;">Category</div>
<div style="position:absolute;left:741px;top:659px;width:10px;height:10px;box-sizing:border-box;background:#2d5b61;"></div>
<div class="t" style="left:758.4px;top:659.03px;font-size:11.3px;line-height:11.3px;color:#161513;">Furniture</div>
<div style="position:absolute;left:816px;top:659px;width:10px;height:10px;box-sizing:border-box;background:#d68021;"></div>
<div class="t" style="left:833.6px;top:659.03px;font-size:11.3px;line-height:11.3px;color:#161513;">Office Supplies</div>
<div style="position:absolute;left:920px;top:659px;width:10px;height:10px;box-sizing:border-box;background:#6cb7b2;"></div>
<div class="t" style="left:937.7px;top:659.03px;font-size:11.3px;line-height:11.3px;color:#161513;">Technology</div>
</body></html>
